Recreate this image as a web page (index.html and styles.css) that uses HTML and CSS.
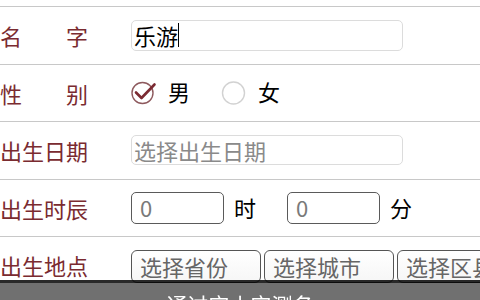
FILE: index.html
```html
<!DOCTYPE html>
<html lang="zh-CN">
<head>
<meta charset="utf-8">
<title>测名</title>
<link rel="stylesheet" href="styles.css">
</head>
<body>
<div class="form">
  <div class="row">
    <div class="label">名字</div>
    <div class="field wide filled">乐游<span class="caret"></span></div>
  </div>
  <div class="row">
    <div class="label">性别</div>
    <div class="radio">
      <svg class="radio-icon" width="27" height="24" viewBox="0 0 27 24">
        <circle cx="11.5" cy="12" r="10.5" fill="none" stroke="#8e5a5e" stroke-width="1.4"/>
        <path d="M5 11.5 L10.5 17 L23.5 3.5" fill="none" stroke="#7b2a32" stroke-width="2.6" stroke-linecap="round" stroke-linejoin="round"/>
      </svg>
      <span class="radio-text">男</span>
    </div>
    <div class="radio">
      <svg class="radio-icon" width="26" height="24" viewBox="0 0 26 24">
        <circle cx="12.5" cy="12" r="11" fill="none" stroke="#d2d2d2" stroke-width="1.4"/>
      </svg>
      <span class="radio-text">女</span>
    </div>
  </div>
  <div class="row">
    <div class="label">出生日期</div>
    <div class="field wide placeholder">选择出生日期</div>
  </div>
  <div class="row">
    <div class="label">出生时辰</div>
    <div class="field small">0</div>
    <span class="unit unit-hour">时</span>
    <div class="field small">0</div>
    <span class="unit">分</span>
  </div>
  <div class="row">
    <div class="label">出生地点</div>
    <div class="selects">
      <div class="select">选择省份</div>
      <div class="select">选择城市</div>
      <div class="select">选择区县</div>
    </div>
  </div>
</div>
<div class="bottom-bar">通过宝小宝测名</div>
</body>
</html>
```

FILE: styles.css
```css
html, body {
  margin: 0;
  padding: 0;
  background: #ffffff;
  overflow: hidden;
  width: 480px;
  height: 300px;
}

body {
  font-family: "Noto Sans CJK SC", "Noto Sans", sans-serif;
  font-size: 22px;
  color: #111;
}

.form {
  padding-top: 6px;
  width: 560px;
}

.row {
  display: flex;
  align-items: center;
  height: 57.5px;
  box-sizing: border-box;
  border-top: 1px solid #c8c8c8;
  white-space: nowrap;
}

.label {
  width: 88px;
  margin-right: 43px;
  flex: none;
  color: #7a2b30;
  text-align: justify;
  text-align-last: justify;
  line-height: 24px;
}

.field {
  box-sizing: border-box;
  display: flex;
  align-items: center;
  flex: none;
  line-height: 22px;
}

.wide {
  width: 272px;
  border: 1px solid #dcdcdc;
  border-radius: 5px;
  padding-left: 2px;
}

.filled {
  height: 31px;
  color: #000;
}

.placeholder {
  height: 30px;
  color: #8a8a8a;
}

.caret {
  display: inline-block;
  width: 1px;
  height: 24px;
  background: #000;
}

.radio {
  display: flex;
  align-items: center;
  margin-right: 31px;
}

.radio-icon {
  display: block;
  flex: none;
}

.radio-text {
  margin-left: 10px;
  color: #000;
  line-height: 24px;
  padding-bottom: 3px;
}

.radio + .radio .radio-text {
  margin-left: 11px;
}

.small {
  width: 93px;
  height: 32px;
  border: 1px solid #5a5a5a;
  border-radius: 5px;
  padding-left: 8px;
  color: #7a7a7a;
  padding-bottom: 2px;
}

.unit {
  margin-left: 10px;
  color: #000;
  line-height: 24px;
  padding-bottom: 2px;
}

.unit-hour {
  margin-right: 31px;
}

.selects {
  display: flex;
  gap: 3px;
  margin-top: 3px;
}

.select {
  box-sizing: border-box;
  width: 130px;
  height: 33px;
  border: 1px solid #555;
  border-radius: 6px;
  padding-left: 8px;
  padding-bottom: 2px;
  display: flex;
  align-items: center;
  color: #666;
  line-height: 22px;
  background: linear-gradient(#ffffff, #f6f6f6);
}

.bottom-bar {
  position: fixed;
  left: 0;
  right: 0;
  top: 280px;
  height: 44px;
  box-sizing: border-box;
  border-top: 3px solid rgba(0, 0, 0, 0.64);
  background: rgba(0, 0, 0, 0.56);
  color: #ffffff;
  text-align: center;
  font-size: 21px;
  line-height: 24px;
  padding-top: 9px;
}
```
